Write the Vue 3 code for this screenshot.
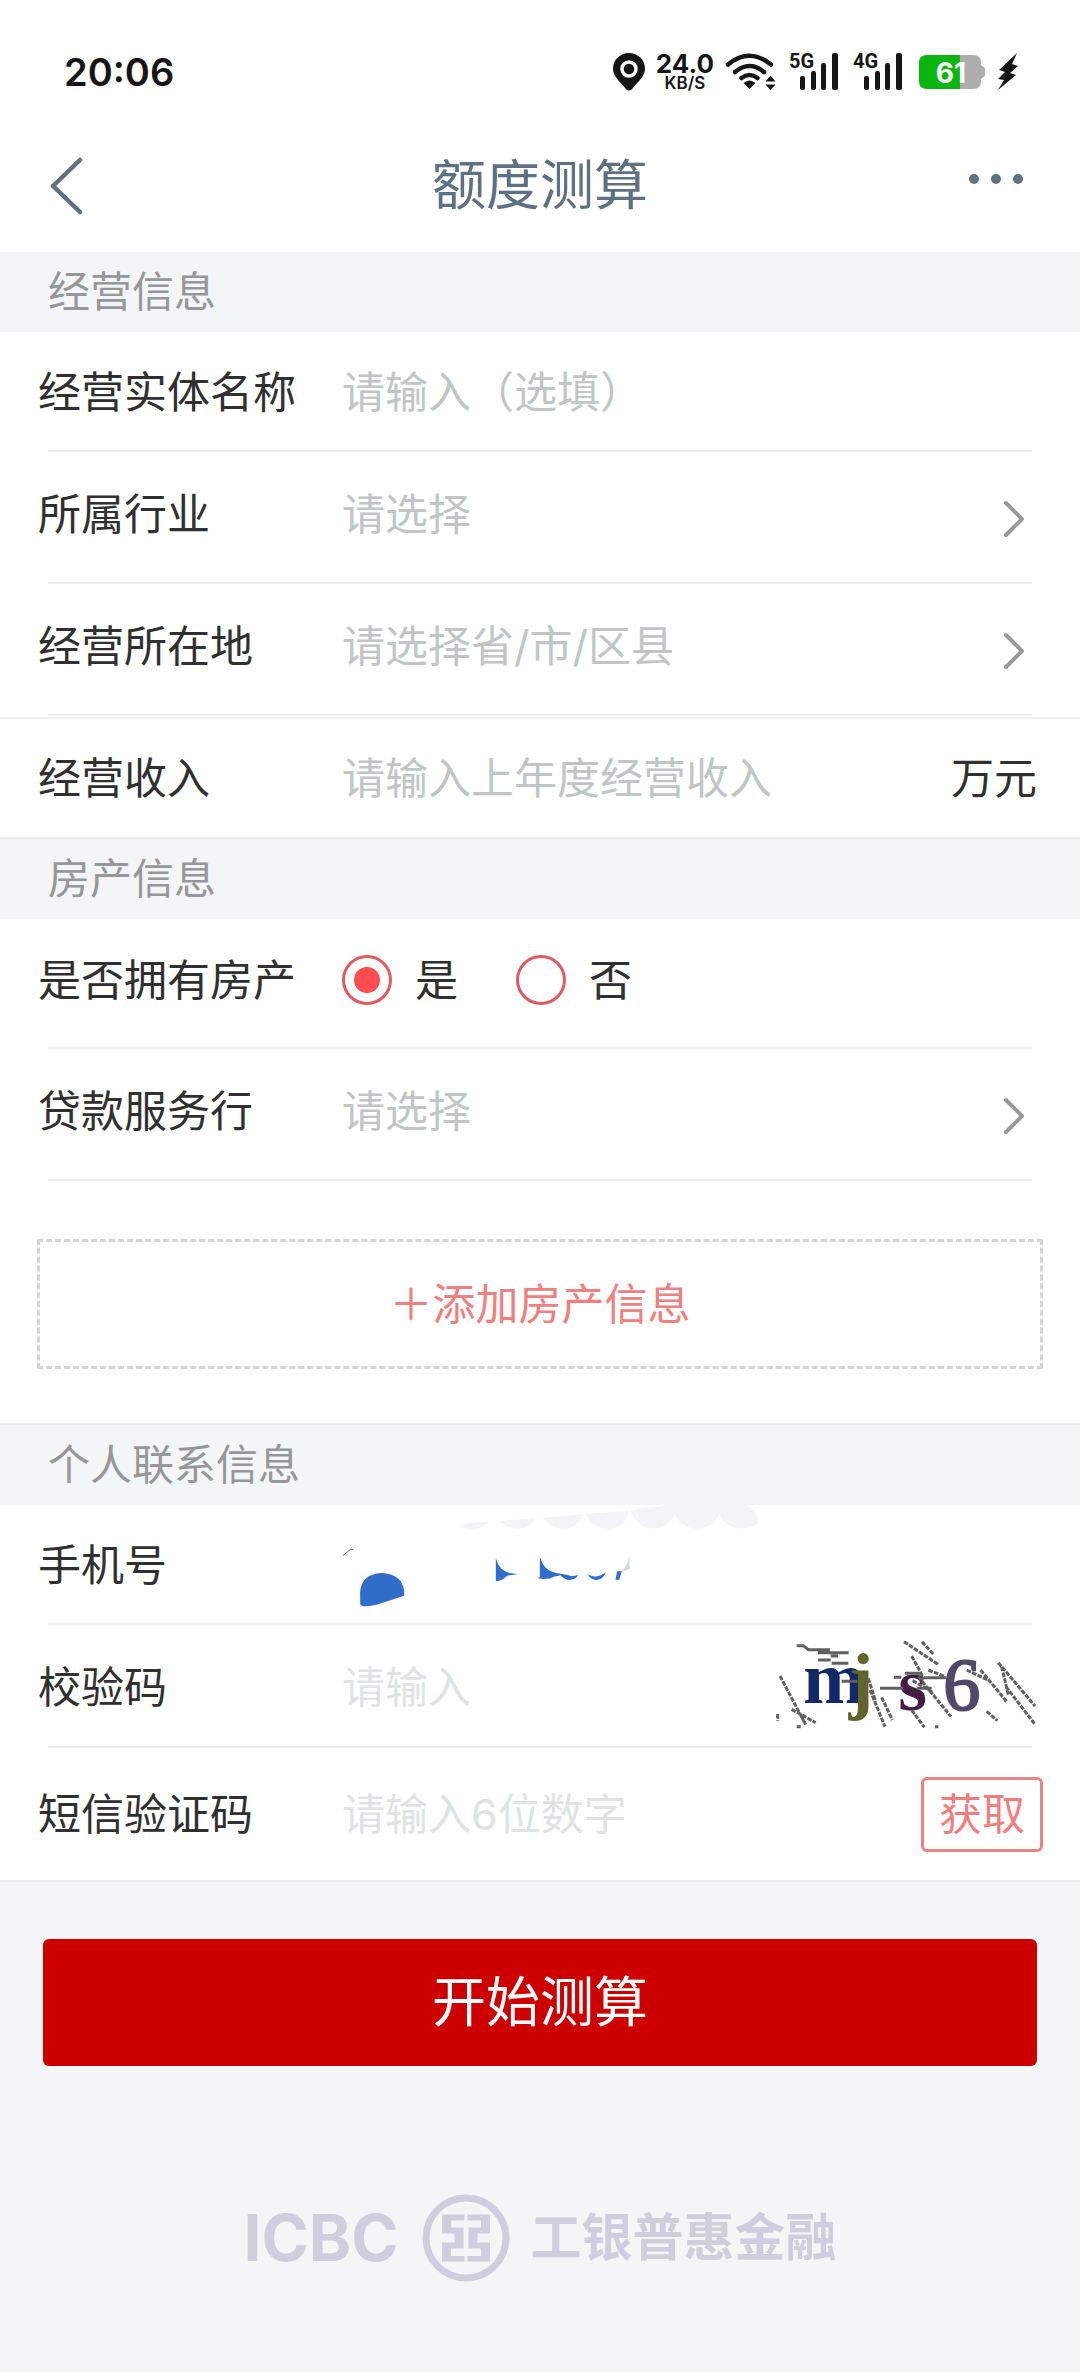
<template>
  <div class="page">
    <div class="status-bar">
      <span class="time">20:06</span>
      <div class="status-icons">
        <svg class="pin" width="32" height="38" viewBox="0 0 32 38">
          <path d="M16 0C7 0 0 7 0 15.500c0 8 6.500 12.500 12.500 20 2 2.800 5 2.800 7 0C25.500 28 32 23.500 32 15.500 32 7 25 0 16 0z" fill="#161616" />
          <circle cx="16" cy="16" r="7" fill="none" stroke="#fff" stroke-width="3.500" />
        </svg>
        <div class="speed"><b>24.0</b><span>KB/S</span></div>
        <svg class="wifi" width="52" height="38" viewBox="0 0 52 38" fill="none" stroke="#161616" stroke-width="4.500" stroke-linecap="round">
          <path d="M3 11.500Q24.500-6 46 11.500M10 19Q24.500 7 39 19M16.500 25Q24.500 19 32.500 25" />
          <path d="M24.500 36l-6-6q6-5 12 0z" fill="#161616" stroke="none" />
          <path d="M40.500 28.500l5-6 5 6zM40.500 31.500h10l-5 5.500z" fill="#161616" stroke="none" />
        </svg>
        <svg v-for="net in networks" :key="net" class="signal" width="50" height="38" viewBox="0 0 50 38">
          <text x="0" y="15">{{ net }}</text>
          <rect x="11" y="23" width="5" height="14" rx="2" />
          <rect x="22" y="18" width="5" height="19" rx="2" />
          <rect x="32" y="10" width="5" height="27" rx="2" />
          <rect x="43" y="0" width="6" height="37" rx="2" />
        </svg>
        <svg class="battery" width="66" height="34" viewBox="0 0 66 34">
          <path d="M41 0h13q8 0 8 8v2l4 3v8l-4 3v2q0 8-8 8H41z" fill="#adadad" />
          <path d="M41 0H8Q0 0 0 8v18q0 8 8 8h33z" fill="#0bb50f" />
          <text x="32" y="28" text-anchor="middle">61</text>
        </svg>
        <svg class="bolt" width="22" height="38" viewBox="0 0 22 38">
          <path d="M20 0L2 17l6 2-7 7 6 1-6 10 18-15-6-2 8-7-6-2z" fill="#161616" />
        </svg>
      </div>
    </div>

    <header class="nav-bar">
      <button class="nav-btn" type="button" aria-label="返回">
        <svg width="36" height="58" viewBox="0 0 36 58"><path d="M32 3L5 29l27 26" fill="none" stroke="#5f7081" stroke-width="4.500" stroke-linecap="round" stroke-linejoin="round" /></svg>
      </button>
      <h1>额度测算</h1>
      <button class="nav-btn more" type="button" aria-label="更多">
        <svg width="56" height="10" viewBox="0 0 56 10" fill="#5f7081"><circle cx="6" cy="5" r="5" /><circle cx="28" cy="5" r="5" /><circle cx="50" cy="5" r="5" /></svg>
      </button>
    </header>

    <form @submit.prevent>
      <h2 class="section-title">经营信息</h2>
      <div class="group">
        <div class="row">
          <label for="entity">经营实体名称</label>
          <input id="entity" v-model="form.entity" type="text" placeholder="请输入（选填）">
        </div>
        <div class="row tall">
          <label for="industry">所属行业</label>
          <select id="industry" v-model="form.industry"><option value="">请选择</option></select>
          <svg class="arrow" viewBox="0 0 24 40"><path d="M4 4l16 16L4 36" /></svg>
        </div>
        <div class="row tall">
          <label for="region">经营所在地</label>
          <select id="region" v-model="form.region"><option value="">请选择省/市/区县</option></select>
          <svg class="arrow" viewBox="0 0 24 40"><path d="M4 4l16 16L4 36" /></svg>
        </div>
        <div class="row income">
          <label for="income">经营收入</label>
          <input id="income" v-model="form.income" type="text" placeholder="请输入上年度经营收入">
          <span class="unit">万元</span>
        </div>
      </div>

      <h2 class="section-title">房产信息</h2>
      <div class="group">
        <div class="row house" role="radiogroup" aria-labelledby="house-label">
          <span id="house-label" class="label">是否拥有房产</span>
          <label v-for="item in houseOptions" :key="item.value" class="radio">
            <input v-model="form.house" type="radio" name="house" :value="item.value">{{ item.label }}
          </label>
        </div>
        <div class="row tall">
          <label for="bank">贷款服务行</label>
          <select id="bank" v-model="form.bank"><option value="">请选择</option></select>
          <svg class="arrow" viewBox="0 0 24 40"><path d="M4 4l16 16L4 36" /></svg>
        </div>
        <button class="add-btn" type="button">＋添加房产信息</button>
      </div>

      <h2 class="section-title">个人联系信息</h2>
      <div class="group">
        <div class="row">
          <label for="phone">手机号</label>
          <input id="phone" v-model="form.phone" type="tel">
          <!-- masked phone number -->
          <svg class="phone-mask" viewBox="100 45 1280 321">
            <g fill="#f3f4f6">
              <path d="M482 110Q520 97 568 98Q545 120 515 120Q495 119 482 110z" />
              <path d="M598 96L708 87Q688 119 655 119Q622 118 598 96z" />
              <path d="M728 87L850 75Q835 119 790 119Q752 118 728 87z" />
              <path d="M858 75L988 65Q975 119 925 119Q878 118 858 75z" />
              <path d="M992 64L1090 51V45H1345V51Q1375 70 1375 100Q1360 119 1325 119Q1278 117 1258 75Q1238 119 1192 119Q1145 118 1124 75Q1105 119 1060 119Q1010 117 992 64z" />
            </g>
            <path d="M129 200L152 181h8" fill="none" stroke="#69738c" stroke-width="3" />
            <g fill="#2f6dc8">
              <path d="M181 345V310Q183 256 246 252Q306 256 313 305V320L235 346Q205 354 187 351z" />
              <path d="M588 208Q598 245 628 252L655 255L622 260Q606 276 588 276z" />
              <path d="M720 203Q730 243 768 252L805 258Q812 264 835 258Q828 272 808 273Q792 271 782 259L762 263Q745 274 714 268L720 264z" />
              <path d="M864 256Q888 272 918 250Q910 272 890 273Q871 272 864 256z" />
              <path d="M952 247h14l-8 25h-11z" />
              <path d="M989 203V241L965 247Q984 228 989 203z" fill="#cbd7e8" />
            </g>
          </svg>
        </div>
        <div class="row captcha-row pale">
          <label for="captcha">校验码</label>
          <input id="captcha" v-model="form.captcha" type="text" placeholder="请输入">
          <svg class="captcha" viewBox="108 93 777 261" role="img" aria-label="图形校验码">
            <g class="letters">
              <text x="190" y="280" fill="#122868">m</text>
              <text x="326" y="286" fill="#60662b">j</text>
              <text x="475" y="301" fill="#451c45">s</text>
              <text x="610" y="301" class="six">6</text>
            </g>
            <g class="noise">
              <path d="M170 107h20l15 12h65M234 128h92M234 150h38M272 138h22M275 160h50M305 214h48M420 235h70M462 202h22M495 190h50M550 203h68M530 235h45" />
              <path stroke-dasharray="14 4" d="M120 198l75 142M155 298l72 40M185 320l12 24M113 312v20M170 350h12M385 205l22 70M390 240l45 110M425 262l32 68M492 95l102 68M546 95l36 40M515 138l38 70M535 200l98 120M515 300l38 52M565 180l50 20M585 350h10M680 180l68 32M722 180l78 95M775 158l110 130M785 170l20 85M798 230l86 112M740 304l32 28M518 212l60 35" />
            </g>
          </svg>
        </div>
        <div class="row tall sms pale">
          <label for="sms">短信验证码</label>
          <input id="sms" v-model="form.sms" type="text" placeholder="请输入6位数字">
          <button class="code-btn" type="button">获取</button>
        </div>
      </div>

      <button class="submit-btn" type="submit">开始测算</button>
    </form>

    <footer class="brand">
      <span class="brand-en">ICBC</span>
      <svg width="88" height="88" viewBox="-44 -44 88 88">
        <circle r="40" fill="none" stroke="#cfcedd" stroke-width="7" />
        <path fill="#cfcedd" d="M-1.500-23.500H-24V-4.500H-11.500V4.500H-24V23.500H-1.500V18H-15V10.500H-2.500V-10.500H-15V-17.500H-1.500zM1.500-23.500H24V-4.500H11.500V4.500H24V23.500H1.500V18H15V10.500H2.500V-10.500H15V-17.500H1.500z" />
      </svg>
      <span class="brand-cn">工银普惠金融</span>
    </footer>
  </div>
</template>

<script setup>
import { reactive } from 'vue'

const networks = ['5G', '4G']
const houseOptions = [
  { value: 'yes', label: '是' },
  { value: 'no', label: '否' }
]

const form = reactive({
  entity: '',
  industry: '',
  region: '',
  income: '',
  house: 'yes',
  bank: '',
  phone: '',
  captcha: '',
  sms: ''
})
</script>

<style>
body { margin: 0; background: #f4f5f7; }
</style>

<style scoped>
* { box-sizing: border-box; }
.page { min-height: 100vh; background: #f4f5f7; color: #303030; font-family: Inter, "Noto Sans CJK SC", sans-serif; font-size: 43px; line-height: 60px; }
button, input, select { margin: 0; padding: 0; border: 0; background: none; color: inherit; font: inherit; }

.status-bar { display: flex; align-items: center; justify-content: space-between; height: 120px; padding: 24px 61px 0 64px; background: #fff; color: #161616; }
.time { font-size: 38px; font-weight: 600; }
.status-icons { display: flex; align-items: center; }
.speed { display: flex; flex-direction: column; align-items: center; margin: 0 11px; font-size: 17px; font-weight: 600; line-height: 16px; }
.speed b { font-size: 26px; font-weight: 700; line-height: 22px; }
.signal { margin-left: 12px; overflow: visible; fill: #161616; }
.signal text { font: 700 20px Roboto, sans-serif; }
.signal + .signal { margin-left: 14px; }
.battery { margin: 0 12px 0 16px; }
.battery text { fill: #fff; font: 700 28px Inter, sans-serif; }

.nav-bar { display: flex; align-items: center; justify-content: space-between; height: 132px; padding: 0 48px; background: #fff; color: #5f7081; }
.nav-bar h1 { margin: 0; font-size: 54px; font-weight: 400; }
.nav-btn { display: flex; width: 64px; }
.more { justify-content: flex-start; padding-bottom: 14px; }

.section-title { display: flex; align-items: center; height: 80px; margin: 0; padding: 0 48px; color: #979797; font-size: 42px; font-weight: 400; }
.group { border-bottom: 2px solid #ebecee; background: #fff; }
.row { position: relative; display: flex; align-items: center; min-height: 120px; padding: 0 38px; }
.row::after { content: ""; position: absolute; right: 48px; bottom: 0; left: 48px; height: 2px; background: #ededee; }
.row:last-child::after { display: none; }
.row > label:first-child, .label { flex: none; width: 304px; }
.row > input, .row select { flex: 1; min-width: 0; height: 60px; outline: 0; }
.row > input::placeholder { color: #c1c5c6; opacity: 1; }
.pale > input::placeholder { color: #e0e3e3; }
.row select { appearance: none; color: #c1c5c6; }
.tall { min-height: 132px; padding-bottom: 8px; }
.sms { padding-bottom: 0; }
.arrow { flex: none; width: 24px; height: 40px; margin: 10px 16px 0 0; fill: none; stroke: #999; stroke-width: 4; stroke-linecap: round; stroke-linejoin: round; }
.income { margin-top: 1px; border-top: 2px solid #ededee; }
.unit { margin-right: 5px; }

.house { min-height: 130px; padding-bottom: 8px; }
.radio { display: flex; align-items: center; margin-right: 58px; }
.radio input { display: grid; place-items: center; width: 50px; height: 50px; margin-right: 23px; border: 3px solid #e05a60; border-radius: 50%; appearance: none; }
.radio input:checked::before { content: ""; width: 26px; height: 26px; border-radius: 50%; background: #ff4d50; }
.add-btn { display: block; width: calc(100% - 74px); height: 130px; margin: 58px 37px 54px; border: 3px dashed #d5d5d5; color: #ef8080; }

.phone-mask { position: absolute; top: -1px; left: 333px; width: 427px; height: 107px; pointer-events: none; }
.captcha-row { min-height: 123px; }
.captcha { flex: none; width: 259px; height: 87px; margin: 0 7px 4px 0; overflow: visible; }
.letters { font: 700 222px "Liberation Serif", serif; }
.six { fill: #504a68; font-weight: 400; stroke: #504a68; stroke-width: 6; }
.noise { fill: none; stroke: #606060; stroke-width: 9; }
.code-btn { flex: none; width: 122px; height: 75px; margin-right: -1px; border: 3px solid #e88286; border-radius: 6px; color: #f47c7c; }

.submit-btn { display: block; width: calc(100% - 86px); height: 127px; margin: 57px 43px 0; border-radius: 6px; background: #cd0000; color: #fff; font-size: 54px; }
.brand { display: flex; align-items: center; justify-content: center; padding: 128px 0 64px; color: #cfcedd; font-weight: 700; }
.brand svg { margin: 0 20px 0 24px; }
.brand-en { font-size: 64px; }
.brand-cn { font-size: 51px; }
</style>
